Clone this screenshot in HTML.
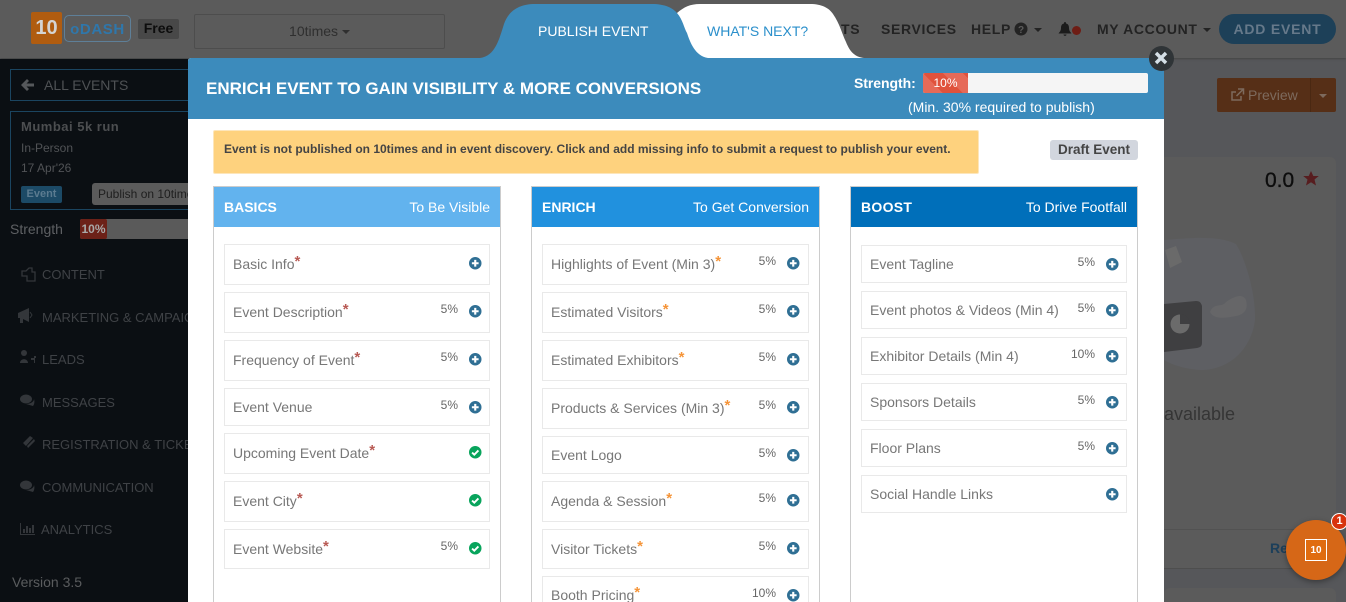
<!DOCTYPE html>
<html style="height:602px;overflow:hidden"><head><meta charset="utf-8"><style>
html,body{margin:0;padding:0}
body{width:1346px;height:602px;overflow:hidden;position:relative;background:#56575a;font-family:"Liberation Sans",sans-serif;font-size:14px}
div,span.a,svg.a{position:absolute}
#w{left:0;top:0;width:1346px;height:602px;overflow:hidden}
.t{white-space:nowrap;line-height:20px}
.n{font-weight:bold;letter-spacing:.65px;color:#232323;top:19px}
.m{left:42px;color:#3f4246;white-space:nowrap;line-height:20px;font-size:13px}
.col{border:1px solid #ccc;background:#fff;top:186px;height:420px;box-sizing:border-box;width:289px}
.h{left:0;right:0;top:0;height:40px;color:#fff;line-height:40px}
.h b{position:absolute;left:10px}
.h span{position:absolute;right:10px}
.r{border:1px solid #e9e9e9;box-sizing:border-box;width:267px;background:#fff}
.s{width:266px}
.r .l{left:8px;top:9px;line-height:20px;color:#777;white-space:nowrap}
.q .l{top:8px}
.r sup{font-size:15px;font-weight:bold;line-height:0;position:relative;top:3px;vertical-align:super;color:#b85a54}
.o sup{color:#f59438}
.r .p{right:32px;top:6px;font-size:12px;line-height:20px;color:#666}
.s .p{right:31px}
.r svg{position:absolute;left:244px;top:12px;width:12.500px;height:12.500px}
</style></head><body>
<svg width="0" height="0" style="position:absolute"><defs>
<symbol id="plus" viewBox="0 0 13 13"><circle cx="6.5" cy="6.5" r="6.5" fill="#2f6f94"/><path d="M3 5.4H5.4V3H7.6V5.4H10V7.6H7.6V10H5.4V7.6H3Z" fill="#fff"/></symbol>
<symbol id="chk" viewBox="0 0 13 13"><circle cx="6.5" cy="6.5" r="6.5" fill="#08a45c"/><path d="M3.2 6.8L5.5 9L9.8 4.6" fill="none" stroke="#fff" stroke-width="2"/></symbol>
</defs></svg>
<div id="w">
<!-- top bar -->
<div style="left:0;top:0;width:1346px;height:58px;background:#5b5b5b;box-shadow:0 1px 2px #444"></div>
<div style="left:31px;top:12px;width:31px;height:32px;background:#b05c10;border-radius:2px;color:#d4d4d4;font:bold 20px/32px 'Liberation Sans';text-align:center">10</div>
<div style="left:64px;top:15px;width:65px;height:25px;border:1px solid #5e7f98;border-radius:5px;color:#2f77ab;font:bold 15px/27px 'Liberation Sans';text-align:center;letter-spacing:.6px">oDASH</div>
<div style="left:138px;top:19px;width:41px;height:20px;background:#484848;border-radius:2px;color:#0d0d0d;font:bold 14px/19px 'Liberation Sans';text-align:center">Free</div>
<div style="left:194px;top:14px;width:249px;height:33px;border:1px solid #4d4d4d;border-radius:2px;color:#2f2f2f;line-height:32px;text-align:center">10times <span style="display:inline-block;border:4px solid transparent;border-top-color:#2f2f2f;border-bottom:0;vertical-align:2px"></span></div>
<div class="t n" style="left:841px">TS</div>
<div class="t n" style="left:881px">SERVICES</div>
<div class="t n" style="left:971px">HELP</div>
<svg class="a" style="left:1014px;top:22px" width="14" height="14" viewBox="0 0 14 14"><circle cx="7" cy="7" r="6.5" fill="#232323"/><text x="7" y="11" font-size="10" font-weight="bold" text-anchor="middle" fill="#5b5b5b" font-family="Liberation Sans">?</text></svg>
<div style="left:1034px;top:28px;border:4px solid transparent;border-top-color:#232323;border-bottom:0"></div>
<svg class="a" style="left:1058px;top:22px" width="14" height="14" viewBox="0 0 14 14"><path d="M7 0C8 0 8 1 8 1.5C10.500 2 11 4 11 6C11 9 12.500 10 13.500 11.500H.5C1.500 10 3 9 3 6C3 4 3.500 2 6 1.500C6 1 6 0 7 0ZM5.500 12.500H8.500C8.500 14.300 5.500 14.300 5.500 12.500Z" fill="#1c1c1c"/></svg>
<div style="left:1072px;top:26px;width:9px;height:9px;border-radius:50%;background:#6e1d15"></div>
<div class="t n" style="left:1097px">MY ACCOUNT</div>
<div style="left:1203px;top:28px;border:4px solid transparent;border-top-color:#232323;border-bottom:0"></div>
<div style="left:1219px;top:14px;width:117px;height:30px;border-radius:15px;background:#1d4058;color:#66798a;font:bold 14px/30px 'Liberation Sans';letter-spacing:.8px;text-align:center">ADD EVENT</div>

<!-- sidebar -->
<div style="left:0;top:59px;width:188px;height:543px;background:#0b0f13"></div>
<div style="left:10px;top:69px;width:190px;height:30px;border:1px solid #1b4560"></div>
<svg class="a" style="left:21px;top:79px" width="13" height="12" viewBox="0 0 13 12"><path d="M6 0L8 2L5.500 4.500H13V7.500H5.500L8 10L6 12L0 6Z" fill="#55585b"/></svg>
<div class="t" style="left:44px;top:75px;color:#4e5154">ALL EVENTS</div>
<div style="left:10px;top:111px;width:190px;height:97px;border:1px solid #1b4560"></div>
<div class="t" style="left:21px;top:117px;color:#4c4e50;font-weight:bold;font-size:13px;letter-spacing:.5px">Mumbai 5k run</div>
<div class="t" style="left:21px;top:138px;color:#515356;font-size:12px">In-Person</div>
<div class="t" style="left:21px;top:158px;color:#515356;font-size:12px">17 Apr'26</div>
<div style="left:21px;top:186px;width:41px;height:17px;background:#1c4a66;border-radius:2px;color:#5b7b90;font:bold 11px/17px 'Liberation Sans';text-align:center">Event</div>
<div class="t" style="left:92px;top:183px;width:110px;height:22px;background:#5b5b5b;border-radius:3px;color:#1e1e1e;font-size:12px;line-height:22px;text-indent:6px;overflow:hidden">Publish on 10times</div>
<div class="t" style="left:10px;top:219px;color:#5e6063">Strength</div>
<div style="left:80px;top:219px;width:110px;height:20px;background:#5a5a5a;border-radius:2px"></div>
<div style="left:80px;top:219px;width:27px;height:20px;background:#6c2118;border-radius:2px;color:#a9a9a9;font:bold 12px/20px 'Liberation Sans';text-align:center">10%</div>
<div class="m" style="top:265px">CONTENT</div>
<div class="m" style="top:308px">MARKETING &amp; CAMPAIGN</div>
<div class="m" style="top:350px">LEADS</div>
<div class="m" style="top:393px">MESSAGES</div>
<div class="m" style="top:435px">REGISTRATION &amp; TICKETS</div>
<div class="m" style="top:478px">COMMUNICATION</div>
<div class="m" style="top:520px;left:41px">ANALYTICS</div>
<svg class="a" style="left:18px;top:266px" width="20" height="272" viewBox="0 0 20 272" fill="#33363a">
<path d="M4 5H8L11 2H14V6H17V15H9V10H4Z" fill="none" stroke="#33363a" stroke-width="1.300"/>
<path d="M0 47L11 42V56L5 53V57H2V52H0Z"/><path d="M12 46L14 49L12 52" fill="none" stroke="#33363a"/>
<circle cx="6" cy="87" r="3"/><path d="M2 97C2 92 10 92 10 97H16V94H13V92H16V90H18V92H17V97Z"/>
<ellipse cx="8" cy="133" rx="6" ry="4.500"/><path d="M8 138C12 138 16 136 16 133C17 136 16 139 15 140Z"/>
<path d="M5 177L12 170L15 172L8 180ZM9 180L16 173L17 175L10 182Z"/>
<ellipse cx="8" cy="219" rx="6" ry="4.500"/><path d="M8 224C12 224 16 222 16 219C17 222 16 225 15 226Z"/>
<path d="M2 257H3V268H17V269H2ZM5 263H7V267H5ZM8 260H10V267H8ZM11 262H13V267H11ZM14 259H16V267H14Z"/>
</svg>
<div class="t" style="left:12px;top:572px;color:#5a5c5e">Version 3.5</div>

<!-- right content -->
<div style="left:1217px;top:78px;width:119px;height:34px;background:#562f17;border-radius:2px"></div>
<div style="left:1310px;top:78px;width:1px;height:34px;background:#4a2812"></div>
<svg class="a" style="left:1230px;top:88px" width="15" height="14" viewBox="0 0 15 14"><path d="M11 8V12H2V4H6M8 1H13.500V6.500M13 1.500L6.500 8" fill="none" stroke="#7d6a5d" stroke-width="1.500"/></svg>
<div class="t" style="left:1248px;top:85px;color:#7d6a5d">Preview</div>
<div style="left:1319px;top:94px;border:4px solid transparent;border-top-color:#7d6a5d;border-bottom:0"></div>
<div style="left:1164px;top:157px;width:172px;height:412px;background:#5b5b5b;border-radius:0 6px 6px 0"></div>
<div style="left:1164px;top:529px;width:172px;height:1px;background:#525252"></div>
<div style="left:1164px;top:568px;width:172px;height:1px;background:#4e4e4e"></div>
<div style="left:1164px;top:588px;width:172px;height:20px;background:#5b5b5b;border-radius:6px 6px 0 0"></div>
<div class="t" style="left:1265px;top:169px;font-size:21px;line-height:24px;color:#0d0d0d;-webkit-text-stroke:.3px #0d0d0d">0.0</div>
<svg class="a" style="left:1303px;top:171px" width="16" height="15" viewBox="0 0 16 15"><path d="M8 0L10.300 5H15.800L11.500 8.500L13 14.500L8 11.200L3 14.500L4.500 8.500L.2 5H5.700Z" fill="#571d1f"/></svg>
<svg class="a" style="left:1164px;top:230px" width="100" height="145" viewBox="0 0 100 145">
<path d="M0 10C25 8 55 5 72 14C82 30 92 65 91 90C88 115 70 138 40 140C25 140 10 136 0 130Z" fill="#5e5f63"/>
<path d="M46 82C50 72 58 78 62 72C68 68 78 62 82 70C84 78 82 84 72 86C62 88 50 90 46 82Z" fill="#666668"/>
<path d="M0 74L32 71C36 71 37 73 38 76L38 112C38 116 37 117 33 118L0 122Z" fill="#3f3f41"/>
<circle cx="16" cy="94" r="9.500" fill="#6b6b6b"/>
<path d="M16 94V84A10 10 0 0 1 26 94Z" fill="#3f3f41"/>
<path d="M1 20L12 16L18 32L6 38Z" fill="#6a6a6a"/>
</svg>
<div class="t" style="left:1164px;top:404px;font-size:18px;color:#353535">available</div>
<div class="t" style="left:1270px;top:538px;font-weight:bold;color:#1c3f5a">Re</div>

<!-- modal -->
<svg class="a" style="left:470px;top:0" width="410" height="60" viewBox="470 0 410 60">
<path d="M668 58L677 13C684 7 690 4 700 4H810C822 4 829 8 833 14C840 24 842 34 846 42C850 52 855 57 864 58Z" fill="#fff"/>
<path d="M480 58C495 56 499 40 504 24C509 10 520 4 535 4H652C665 4 673 8 677 13C683 20 684 28 687 33C690 42 695 56 708 58Z" fill="#3c8bbc"/>
</svg>
<div class="t" style="left:538px;top:21px;color:#fff">PUBLISH EVENT</div>
<div class="t" style="left:707px;top:21px;color:#2a8fcb">WHAT'S NEXT?</div>
<div style="left:188px;top:58px;width:976px;height:544px;background:#fff;border-radius:3px 0 0 0"></div>
<div style="left:188px;top:58px;width:976px;height:61px;background:#3c8bbc;border-radius:3px 0 0 0"></div>
<div class="t" style="left:206px;top:78px;color:#fff;font-weight:bold;font-size:17px;line-height:21px">ENRICH EVENT TO GAIN VISIBILITY &amp; MORE CONVERSIONS</div>
<div class="t" style="left:854px;top:73px;color:#fff;font-weight:bold;letter-spacing:-.05px">Strength:</div>
<div style="left:923px;top:73px;width:225px;height:20px;background:#f5f5f5;border-radius:2px"></div>
<div style="left:923px;top:73px;width:45px;height:20px;border-radius:2px 0 0 2px;background:linear-gradient(45deg,#e0523c 25%,#e66a58 25%,#e66a58 50%,#e0523c 50%,#e0523c 75%,#e66a58 75%);background-size:40px 40px;color:#fff;font-size:12px;line-height:21px;text-align:center">10%</div>
<div class="t" style="left:908px;top:97px;color:#fff">(Min. 30% required to publish)</div>
<div style="left:1149px;top:46px;width:25px;height:25px;border-radius:50%;background:#2f3437"></div>
<svg class="a" style="left:1154px;top:51px" width="14" height="14" viewBox="0 0 14 14"><path d="M2 2L12 12M12 2L2 12" stroke="#d4dfe6" stroke-width="3.500"/></svg>

<div style="left:213px;top:130px;width:766px;height:44px;box-sizing:border-box;background:#fed27e;border:1px solid #fde6bb;border-radius:2px"></div>
<div class="t" style="left:224px;top:139px;font-weight:bold;font-size:12px;color:#444">Event is not published on 10times and in event discovery. Click and add missing info to submit a request to publish your event.</div>
<div style="left:1050px;top:140px;width:88px;height:20px;background:#d2d6de;border-radius:3px;color:#444;font:bold 13.500px/19px 'Liberation Sans';text-align:center">Draft Event</div>

<!-- column 1 -->
<div class="col" style="left:213px;width:288px"><div class="h" style="background:#62b3ee"><b>BASICS</b><span>To Be Visible</span></div></div>
<div class="r s" style="left:224px;top:244px;height:41px"><span class="a l">Basic Info<sup>*</sup></span><svg><use href="#plus"/></svg></div>
<div class="r s" style="left:224px;top:292px;height:41px"><span class="a l">Event Description<sup>*</sup></span><span class="a p">5%</span><svg><use href="#plus"/></svg></div>
<div class="r s" style="left:224px;top:340px;height:41px"><span class="a l">Frequency of Event<sup>*</sup></span><span class="a p">5%</span><svg><use href="#plus"/></svg></div>
<div class="r s q" style="left:224px;top:388px;height:38px"><span class="a l">Event Venue</span><span class="a p">5%</span><svg><use href="#plus"/></svg></div>
<div class="r s" style="left:224px;top:433px;height:41px"><span class="a l">Upcoming Event Date<sup>*</sup></span><svg><use href="#chk"/></svg></div>
<div class="r s" style="left:224px;top:481px;height:41px"><span class="a l">Event City<sup>*</sup></span><svg><use href="#chk"/></svg></div>
<div class="r s" style="left:224px;top:529px;height:40px"><span class="a l">Event Website<sup>*</sup></span><span class="a p">5%</span><svg><use href="#chk"/></svg></div>

<!-- column 2 -->
<div class="col" style="left:531px"><div class="h" style="background:#2191de"><b>ENRICH</b><span>To Get Conversion</span></div></div>
<div class="r o" style="left:542px;top:244px;height:41px"><span class="a l">Highlights of Event (Min 3)<sup>*</sup></span><span class="a p">5%</span><svg><use href="#plus"/></svg></div>
<div class="r o" style="left:542px;top:292px;height:41px"><span class="a l">Estimated Visitors<sup>*</sup></span><span class="a p">5%</span><svg><use href="#plus"/></svg></div>
<div class="r o" style="left:542px;top:340px;height:41px"><span class="a l">Estimated Exhibitors<sup>*</sup></span><span class="a p">5%</span><svg><use href="#plus"/></svg></div>
<div class="r o" style="left:542px;top:388px;height:41px"><span class="a l">Products &amp; Services (Min 3)<sup>*</sup></span><span class="a p">5%</span><svg><use href="#plus"/></svg></div>
<div class="r o q" style="left:542px;top:436px;height:38px"><span class="a l">Event Logo</span><span class="a p">5%</span><svg><use href="#plus"/></svg></div>
<div class="r o" style="left:542px;top:481px;height:41px"><span class="a l">Agenda &amp; Session<sup>*</sup></span><span class="a p">5%</span><svg><use href="#plus"/></svg></div>
<div class="r o" style="left:542px;top:529px;height:40px"><span class="a l">Visitor Tickets<sup>*</sup></span><span class="a p">5%</span><svg><use href="#plus"/></svg></div>
<div class="r o q" style="left:542px;top:576px;height:41px"><span class="a l">Booth Pricing<sup>*</sup></span><span class="a p">10%</span><svg><use href="#plus"/></svg></div>

<!-- column 3 -->
<div class="col" style="left:850px;width:288px"><div class="h" style="background:#006fba"><b style="letter-spacing:.3px">BOOST</b><span>To Drive Footfall</span></div></div>
<div class="r s q" style="left:861px;top:245px;height:38px"><span class="a l">Event Tagline</span><span class="a p">5%</span><svg><use href="#plus"/></svg></div>
<div class="r s q" style="left:861px;top:291px;height:38px"><span class="a l">Event photos &amp; Videos (Min 4)</span><span class="a p">5%</span><svg><use href="#plus"/></svg></div>
<div class="r s q" style="left:861px;top:337px;height:38px"><span class="a l">Exhibitor Details (Min 4)</span><span class="a p">10%</span><svg><use href="#plus"/></svg></div>
<div class="r s q" style="left:861px;top:383px;height:38px"><span class="a l">Sponsors Details</span><span class="a p">5%</span><svg><use href="#plus"/></svg></div>
<div class="r s q" style="left:861px;top:429px;height:38px"><span class="a l">Floor Plans</span><span class="a p">5%</span><svg><use href="#plus"/></svg></div>
<div class="r s q" style="left:861px;top:475px;height:38px"><span class="a l">Social Handle Links</span><svg><use href="#plus"/></svg></div>

<!-- chat bubble -->
<div style="left:1286px;top:520px;width:60px;height:60px;border-radius:50%;background:#d66717;box-shadow:0 2px 6px rgba(0,0,0,.35)"></div>
<div style="left:1305px;top:539px;width:20px;height:20px;border:1px solid #fff;color:#fff;font:bold 10px/21px 'Liberation Sans';text-align:center;background:#e06c10">10</div>
<div style="left:1331px;top:513px;width:15px;height:15px;border:1.500px solid #fff;border-radius:50%;background:#d8330e;color:#fff;font:bold 11px/15px 'Liberation Sans';text-align:center">1</div>
</div>
</body></html>
